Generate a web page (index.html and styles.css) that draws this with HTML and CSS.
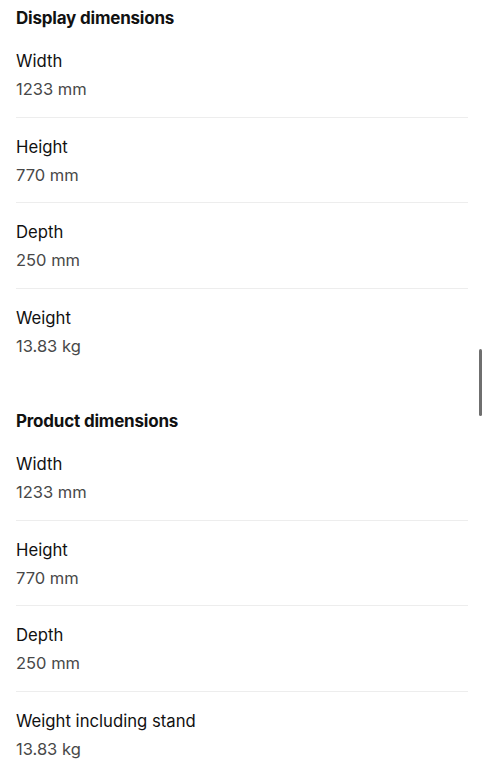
FILE: index.html
```html
<!DOCTYPE html>
<html lang="en">
<head>
    <meta charset="UTF-8">
    <meta name="viewport" content="width=device-width, initial-scale=1.0">
    <title>Dimensions</title>
    <link rel="stylesheet" href="styles.css">
</head>
<body>
    <div class="specs">
        <section class="spec-group">
            <h2 class="spec-title">Display dimensions</h2>
            <div class="spec-row">
                <div class="spec-label">Width</div>
                <div class="spec-value">1233 mm</div>
            </div>
            <div class="spec-row">
                <div class="spec-label">Height</div>
                <div class="spec-value">770 mm</div>
            </div>
            <div class="spec-row">
                <div class="spec-label">Depth</div>
                <div class="spec-value">250 mm</div>
            </div>
            <div class="spec-row">
                <div class="spec-label">Weight</div>
                <div class="spec-value">13.83 kg</div>
            </div>
        </section>

        <section class="spec-group">
            <h2 class="spec-title">Product dimensions</h2>
            <div class="spec-row">
                <div class="spec-label">Width</div>
                <div class="spec-value">1233 mm</div>
            </div>
            <div class="spec-row">
                <div class="spec-label">Height</div>
                <div class="spec-value">770 mm</div>
            </div>
            <div class="spec-row">
                <div class="spec-label">Depth</div>
                <div class="spec-value">250 mm</div>
            </div>
            <div class="spec-row">
                <div class="spec-label">Weight including stand</div>
                <div class="spec-value">13.83 kg</div>
            </div>
        </section>
    </div>
    <div class="scroll-thumb"></div>
</body>
</html>
```

FILE: styles.css
```css
body {
    margin: 0;
    background: #fff;
    font-family: Inter, "Noto Sans", sans-serif;
    color: #111;
    overflow: hidden;
}

.specs {
    padding: 6px 16px 0 16px;
}

.spec-group + .spec-group {
    margin-top: 36px;
}

.spec-title {
    margin: 0 0 2px 0;
    font-size: 17px;
    line-height: 24px;
    font-weight: 700;
    letter-spacing: -0.2px;
    color: #111;
}

.spec-row {
    padding: 17px 0 15.5px 0;
    border-bottom: 1px solid #ededed;
}

.spec-row:last-child {
    border-bottom: none;
}

.spec-label {
    font-size: 16.7px;
    line-height: 24px;
    color: #111;
}

.spec-value {
    margin-top: 4px;
    font-size: 16.5px;
    line-height: 24px;
    color: #484848;
}

/* overlay scrollbar thumb */
.scroll-thumb {
    position: fixed;
    right: 2px;
    top: 349px;
    width: 3px;
    height: 67px;
    border-radius: 2px;
    background: #6f6f6f;
}
```
